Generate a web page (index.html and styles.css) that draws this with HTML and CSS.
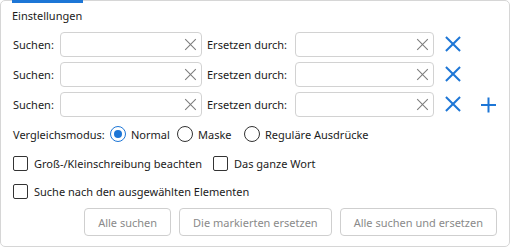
FILE: index.html
```html
<!DOCTYPE html>
<html>

<head>
    <title>Einstellungen</title>
    <link rel="stylesheet" href="styles.css">
</head>

<body>
    <div class="panel">
        <div class="title">Einstellungen</div>

        <div class="pairs">
            <div class="pair">
                <span class="label">Suchen:</span>
                <div class="field find"><input type="text"><span class="clear"></span></div>
                <span class="label label-replace">Ersetzen durch:</span>
                <div class="field replace"><input type="text"><span class="clear"></span></div>
                <button class="icon-btn remove" title="Entfernen"></button>
            </div>
            <div class="pair">
                <span class="label">Suchen:</span>
                <div class="field find"><input type="text"><span class="clear"></span></div>
                <span class="label label-replace">Ersetzen durch:</span>
                <div class="field replace"><input type="text"><span class="clear"></span></div>
                <button class="icon-btn remove" title="Entfernen"></button>
            </div>
            <div class="pair">
                <span class="label">Suchen:</span>
                <div class="field find"><input type="text"><span class="clear"></span></div>
                <span class="label label-replace">Ersetzen durch:</span>
                <div class="field replace"><input type="text"><span class="clear"></span></div>
                <button class="icon-btn remove" title="Entfernen"></button>
                <button class="icon-btn add" title="Hinzufügen"></button>
            </div>
        </div>

        <div class="option-row mode">
            <span class="mode-label">Vergleichsmodus:</span>
            <label class="radio fixed"><span class="dot checked"></span>Normal</label>
            <label class="radio fixed"><span class="dot"></span>Maske</label>
            <label class="radio"><span class="dot"></span>Reguläre Ausdrücke</label>
        </div>

        <div class="option-row checks">
            <label class="check"><span class="box"></span>Groß-/Kleinschreibung beachten</label>
            <label class="check"><span class="box"></span>Das ganze Wort</label>
        </div>

        <div class="option-row checks second">
            <label class="check"><span class="box"></span>Suche nach den ausgewählten Elementen</label>
        </div>

        <div class="actions">
            <button class="action" disabled>Alle suchen</button>
            <button class="action" disabled>Die markierten ersetzen</button>
            <button class="action" disabled>Alle suchen und ersetzen</button>
        </div>
    </div>
</body>

</html>
```

FILE: styles.css
```css
body {
    margin: 0;
    padding: 0;
    background-color: #fff;
    font-family: "Noto Sans", "Open Sans", sans-serif;
    font-size: 11px;
    color: #1b1b1b;
}

.panel {
    position: relative;
    box-sizing: border-box;
    width: 510px;
    height: 247px;
    border: 1px solid #d6d6d6;
    border-radius: 5px;
    padding: 0 12px 0 12px;
    display: flex;
    flex-direction: column;
}

/* selected tab marker */
.panel::before {
    content: "";
    position: absolute;
    top: -1px;
    left: 11px;
    width: 71px;
    height: 3px;
    background-color: #1d76d6;
}

.title {
    padding-top: 6px;
    line-height: 17px;
    height: 17px;
    margin-left: -1px;
    margin-bottom: 8px;
}

.pairs {
    display: flex;
    flex-direction: column;
    gap: 5px;
}

.pair {
    display: flex;
    align-items: center;
    height: 25px;
}

.label {
    width: 47px;
    flex: none;
}

.label-replace {
    width: 88px;
    padding-left: 5px;
}

.field {
    position: relative;
    box-sizing: border-box;
    height: 25px;
    border: 1px solid #d2d2d2;
    border-radius: 4px;
    flex: none;
}

.field.find {
    width: 142px;
}

.field.replace {
    width: 139px;
}

.field input {
    border: none;
    outline: none;
    background: transparent;
    width: 100%;
    height: 100%;
    box-sizing: border-box;
    padding: 0 24px 0 6px;
    font: inherit;
}

.clear {
    position: absolute;
    right: 5px;
    top: 6px;
    width: 11px;
    height: 11px;
}

.clear::before,
.clear::after {
    content: "";
    position: absolute;
    left: -2px;
    top: 5px;
    width: 15px;
    height: 1px;
    background-color: #7a7a7a;
    transform: rotate(45deg);
}

.clear::after {
    transform: rotate(-45deg);
}

.icon-btn {
    position: relative;
    width: 25px;
    height: 25px;
    border: none;
    background: transparent;
    padding: 0;
    flex: none;
}

.remove {
    margin-left: 7px;
}

.add {
    margin-left: 10px;
}

.remove::before,
.remove::after {
    content: "";
    position: absolute;
    left: 2px;
    top: 11px;
    width: 20px;
    height: 2px;
    background-color: #1d76d6;
    transform: rotate(45deg);
}

.remove::after {
    transform: rotate(-45deg);
}

.add::before,
.add::after {
    content: "";
    position: absolute;
    left: 5px;
    top: 12px;
    width: 15px;
    height: 2px;
    background-color: #1d76d6;
}

.add::after {
    transform: rotate(90deg);
}

.option-row {
    display: flex;
    align-items: center;
    height: 18px;
}

.mode {
    margin-top: 8px;
}

.mode-label {
    width: 97px;
    flex: none;
}

.radio,
.check {
    display: flex;
    align-items: center;
}

.radio.fixed {
    width: 67px;
    flex: none;
}

.dot {
    box-sizing: border-box;
    width: 16px;
    height: 16px;
    border: 1px solid #333;
    border-radius: 50%;
    margin-right: 5px;
    position: relative;
    flex: none;
}

.dot.checked {
    border-color: #1d76d6;
}

.dot.checked::after {
    content: "";
    position: absolute;
    left: 3px;
    top: 3px;
    width: 8px;
    height: 8px;
    border-radius: 50%;
    background-color: #1d76d6;
}

.checks {
    margin-top: 11px;
}

.checks.second {
    margin-top: 10px;
}

.check {
    margin-right: 11px;
}

.box {
    box-sizing: border-box;
    width: 15px;
    height: 15px;
    border: 1px solid #333;
    border-radius: 2px;
    margin-right: 6px;
}

.actions {
    display: flex;
    justify-content: flex-end;
    gap: 8px;
    margin-top: 8px;
}

.action {
    height: 28px;
    box-sizing: border-box;
    border: 1px solid #cfcfcf;
    border-radius: 4px;
    background-color: #fff;
    color: #8a8a8a;
    font: inherit;
    padding: 0 13px;
}
```
